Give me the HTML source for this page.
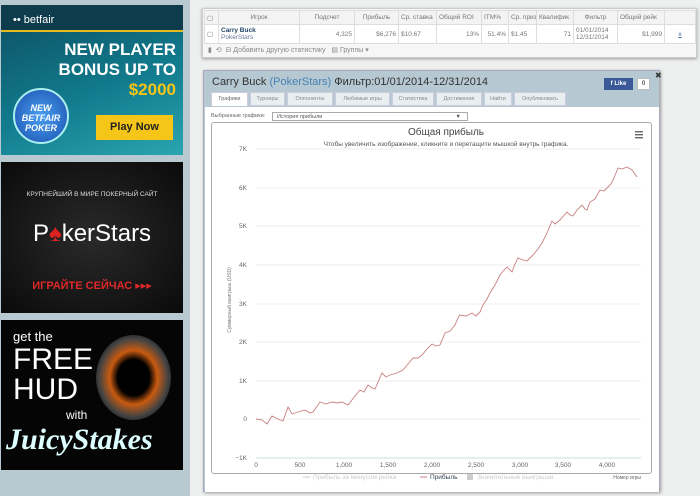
<!DOCTYPE html>
<html><head><meta charset="utf-8"><style>
*{margin:0;padding:0;box-sizing:border-box}
body{width:700px;height:496px;overflow:hidden;background:#eef0f0;font-family:"Liberation Sans","DejaVu Sans",sans-serif;position:relative}
.abs{position:absolute}
#left{left:0;top:0;width:190px;height:496px;background:#b9c9d1}
table{border-collapse:collapse;table-layout:fixed}
td{font-size:6.5px;color:#777;border:1px solid #ddd;padding:0 2px;white-space:nowrap;overflow:hidden}
.tab{position:absolute;top:92px;height:14px;background:#e9eef0;border:1px solid #ccd;font-size:5.5px;color:#888;text-align:center;line-height:13px}
</style></head><body>
<div id="left" class="abs"></div>
<!-- betfair -->
<div class="abs" style="left:1px;top:5px;width:182px;height:150px;background:linear-gradient(160deg,#0d4d60,#117a8c 55%,#2aa5b0);overflow:hidden">
 <div class="abs" style="left:0;top:0;width:182px;height:27px;background:#0f3c4c;border-bottom:2px solid #e8b820"></div>
 <div class="abs" style="left:12px;top:9px;color:#fff;font-size:11px">•• betfair</div>
 <div class="abs" style="left:40px;top:35px;width:135px;text-align:right;color:#fff;font-weight:bold;font-size:17px;line-height:20px">NEW PLAYER<br>BONUS UP TO<br><span style="color:#f5c518">$2000</span></div>
 <div class="abs" style="left:12px;top:83px;width:56px;height:56px;border-radius:50%;background:radial-gradient(#4aa0f0,#1a4fb0);border:2px solid #aee;color:#fff;font-weight:bold;font-style:italic;font-size:9px;text-align:center;line-height:10px;padding-top:13px">NEW<br>BETFAIR<br>POKER</div>
 <div class="abs" style="left:95px;top:110px;width:77px;height:25px;background:#f5c518;color:#222;font-weight:bold;font-size:11px;text-align:center;line-height:25px">Play Now</div>
</div>
<!-- pokerstars -->
<div class="abs" style="left:1px;top:162px;width:182px;height:151px;background:radial-gradient(#2a2a2a,#0a0a0a)">
 <div class="abs" style="left:0;top:29px;width:182px;text-align:center;color:#ddd;font-size:6.5px">КРУПНЕЙШИЙ В МИРЕ ПОКЕРНЫЙ САЙТ</div>
 <div class="abs" style="left:0;top:58px;width:182px;text-align:center;color:#fff;font-size:24px">P<span style="color:#d22">♠</span>kerStars</div>
 <div class="abs" style="left:0;top:117px;width:182px;text-align:center;color:#e02828;font-weight:bold;font-size:11px">ИГРАЙТЕ СЕЙЧАС ▸▸▸</div>
</div>
<!-- juicy -->
<div class="abs" style="left:1px;top:320px;width:182px;height:150px;background:#050505;overflow:hidden">
 <div class="abs" style="left:95px;top:15px;width:75px;height:85px;border-radius:50%;background:radial-gradient(#000 30%,#c85a10 45%,#444 65%,#111 80%)"></div>
 <div class="abs" style="left:12px;top:9px;color:#fff;font-size:13px">get the</div>
 <div class="abs" style="left:12px;top:25px;color:#fff;font-size:30px;line-height:30px">FREE<br>HUD</div>
 <div class="abs" style="left:65px;top:88px;color:#fff;font-size:12px">with</div>
 <div class="abs" style="left:5px;top:103px;color:#dff;font-size:30px;font-weight:bold;font-style:italic;font-family:'Liberation Serif',serif">JuicyStakes</div>
</div>
<!-- stats table -->
<div class="abs" style="left:202px;top:8px;width:495px;height:50px;background:#f6f6f6;border:1px solid #ccc;box-shadow:0 1px 3px #999">
 <table class="abs" style="left:1px;top:1px;width:492px;background:#fff">
 <colgroup><col style="width:14px"><col style="width:81px"><col style="width:55px"><col style="width:44px"><col style="width:38px"><col style="width:45px"><col style="width:27px"><col style="width:28px"><col style="width:37px"><col style="width:44px"><col style="width:47px"><col></colgroup>
 <tr style="height:14px;background:#f3f3f3"><td>▢</td><td style="text-align:center">Игрок</td><td style="text-align:center">Подсчет</td><td style="text-align:center">Прибыль</td><td>Ср. ставка</td><td>Общий ROI</td><td>ITM%</td><td>Ср. приз</td><td>Квалифик</td><td style="text-align:center">Фильтр</td><td>Общий рейк</td><td></td></tr>
 <tr style="height:19px"><td>▢</td><td style="line-height:7px"><b style="color:#246">Carry Buck</b><br><span style="color:#679">PokerStars</span></td><td style="text-align:right">4,325</td><td style="text-align:right">$6,276</td><td>$10.67</td><td style="text-align:right">13%</td><td style="text-align:right">51.4%</td><td>$1.45</td><td style="text-align:right">71</td><td style="line-height:7px">01/01/2014<br>12/31/2014</td><td style="text-align:right">$1,999</td><td style="color:#46a;text-align:center"><u>x</u></td></tr>
 </table>
 <div class="abs" style="left:5px;top:37px;font-size:7px;color:#888">▮ &nbsp;⟲ &nbsp;⊟ Добавить другую статистику &nbsp; ▤ Группы ▾</div>
</div>
<!-- chart panel -->
<div class="abs" style="left:203px;top:70px;width:457px;height:422px;background:#b6c8d2;border:1px solid #aab;box-shadow:1px 1px 3px #999">
 <div class="abs" style="left:8px;top:5px;font-size:11px;color:#333">Carry Buck <span style="color:#4682b4">(PokerStars)</span> Фильтр:01/01/2014-12/31/2014</div>
 <div class="abs" style="left:400px;top:7px;width:29px;height:12px;background:#3b5998;color:#fff;font-size:6px;font-weight:bold;line-height:12px;text-align:center">f Like</div>
 <div class="abs" style="left:433px;top:7px;width:13px;height:12px;background:#fff;border:1px solid #bbb;font-size:6px;text-align:center;line-height:10px">0</div>
 <div class="abs" style="left:451px;top:0;font-size:8px;color:#333">✖</div>
 <div class="abs" style="left:1px;top:36px;width:454px;height:385px;background:#fff"></div>
</div>
<div class="tab" style="left:211px;width:37px;background:#fff;border-bottom:none;color:#666">Графики</div>
<div class="tab" style="left:250px;width:35px">Турниры</div>
<div class="tab" style="left:287px;width:46px">Оппоненты</div>
<div class="tab" style="left:335px;width:55px">Любимые игры</div>
<div class="tab" style="left:392px;width:42px">Статистика</div>
<div class="tab" style="left:436px;width:46px">Достижения</div>
<div class="tab" style="left:484px;width:28px">Найти</div>
<div class="tab" style="left:514px;width:52px">Опубликовать</div>
<div class="abs" style="left:211px;top:113px;font-size:5.5px;color:#666">Выбранные графики:</div>
<div class="abs" style="left:272px;top:112px;width:196px;height:9px;border:1px solid #aaa;background:#fff;font-size:5.5px;color:#555;line-height:8px;padding-left:4px">История прибыли<span style="position:absolute;right:6px">▼</span></div>
<div class="abs" style="left:211px;top:122px;width:441px;height:352px;border:1px solid #aaa;border-radius:3px;background:#fff"></div>
<svg class="abs" style="left:0;top:0" width="700" height="496">
 <g stroke="#eee" stroke-width="1">
  <line x1="256" y1="149" x2="641" y2="149"/><line x1="256" y1="188" x2="641" y2="188"/><line x1="256" y1="226" x2="641" y2="226"/><line x1="256" y1="265" x2="641" y2="265"/><line x1="256" y1="304" x2="641" y2="304"/><line x1="256" y1="342" x2="641" y2="342"/><line x1="256" y1="381" x2="641" y2="381"/><line x1="256" y1="419" x2="641" y2="419"/>
  <line x1="256" y1="458" x2="641" y2="458" stroke="#cdd"/>
 </g>
 <g font-size="6.5" fill="#666" text-anchor="end">
  <text x="247" y="151">7K</text><text x="247" y="190">6K</text><text x="247" y="228">5K</text><text x="247" y="267">4K</text><text x="247" y="306">3K</text><text x="247" y="344">2K</text><text x="247" y="383">1K</text><text x="247" y="421">0</text><text x="247" y="460">−1K</text>
 </g>
 <g font-size="6.5" fill="#666" text-anchor="middle">
  <text x="256" y="467">0</text><text x="300" y="467">500</text><text x="344" y="467">1,000</text><text x="388" y="467">1,500</text><text x="432" y="467">2,000</text><text x="476" y="467">2,500</text><text x="520" y="467">3,000</text><text x="563" y="467">3,500</text><text x="607" y="467">4,000</text>
 </g>
 <text x="446" y="135" font-size="10" fill="#444" text-anchor="middle">Общая прибыль</text>
 <text x="446" y="146" font-size="6.5" fill="#555" text-anchor="middle">Чтобы увеличить изображение, кликните и перетащите мышкой внутрь графика.</text>
 <g fill="#666"><rect x="635" y="131" width="8" height="1.4"/><rect x="635" y="134" width="8" height="1.4"/><rect x="635" y="137" width="8" height="1.4"/></g>
 <text x="231" y="300" font-size="5" fill="#777" transform="rotate(-90 231 300)" text-anchor="middle">Суммарный выигрыш (USD)</text>
 <polyline fill="none" stroke="#c88080" stroke-width="0.9" points="256,419 262,420 267,424 272,416 278,419 283,421 288,407 292,414 298,412 305,410 310,413 313,412 320,402 326,404 332,402 337,403 342,402 348,405 355,396 360,390 364,392 368,385 372,388 375,389 382,373 386,377 390,375 397,373 403,370 408,364 413,358 418,358 422,355 427,349 432,344 436,346 440,345 445,333 450,331 455,325 458,318 460,315 466,316 472,313 476,316 480,312 483,305 487,299 490,293 495,285 500,275 504,270 507,267 510,270 512,272 515,264 518,258 523,260 527,261 533,255 538,249 542,243 547,233 552,221 555,224 560,220 567,212 570,215 573,216 577,210 582,205 585,209 587,210 590,202 595,199 600,190 604,191 608,187 611,184 613,180 616,173 618,168 622,169 627,167 632,170 637,177"/>
 <g font-size="6.5">
  <line x1="303" y1="477" x2="310" y2="477" stroke="#ccc"/><text x="313" y="479" fill="#ccc">Прибыль за минусом рейка</text>
  <line x1="420" y1="477" x2="427" y2="477" stroke="#c88080"/><text x="430" y="479" fill="#345">Прибыль</text>
  <rect x="467" y="474" width="6" height="6" fill="#ccc"/><text x="477" y="479" fill="#ccc">Значительные выигрыши</text>
 </g>
 <text x="641" y="479" font-size="5" fill="#666" text-anchor="end">Номер игры</text>
</svg>
</body></html>
